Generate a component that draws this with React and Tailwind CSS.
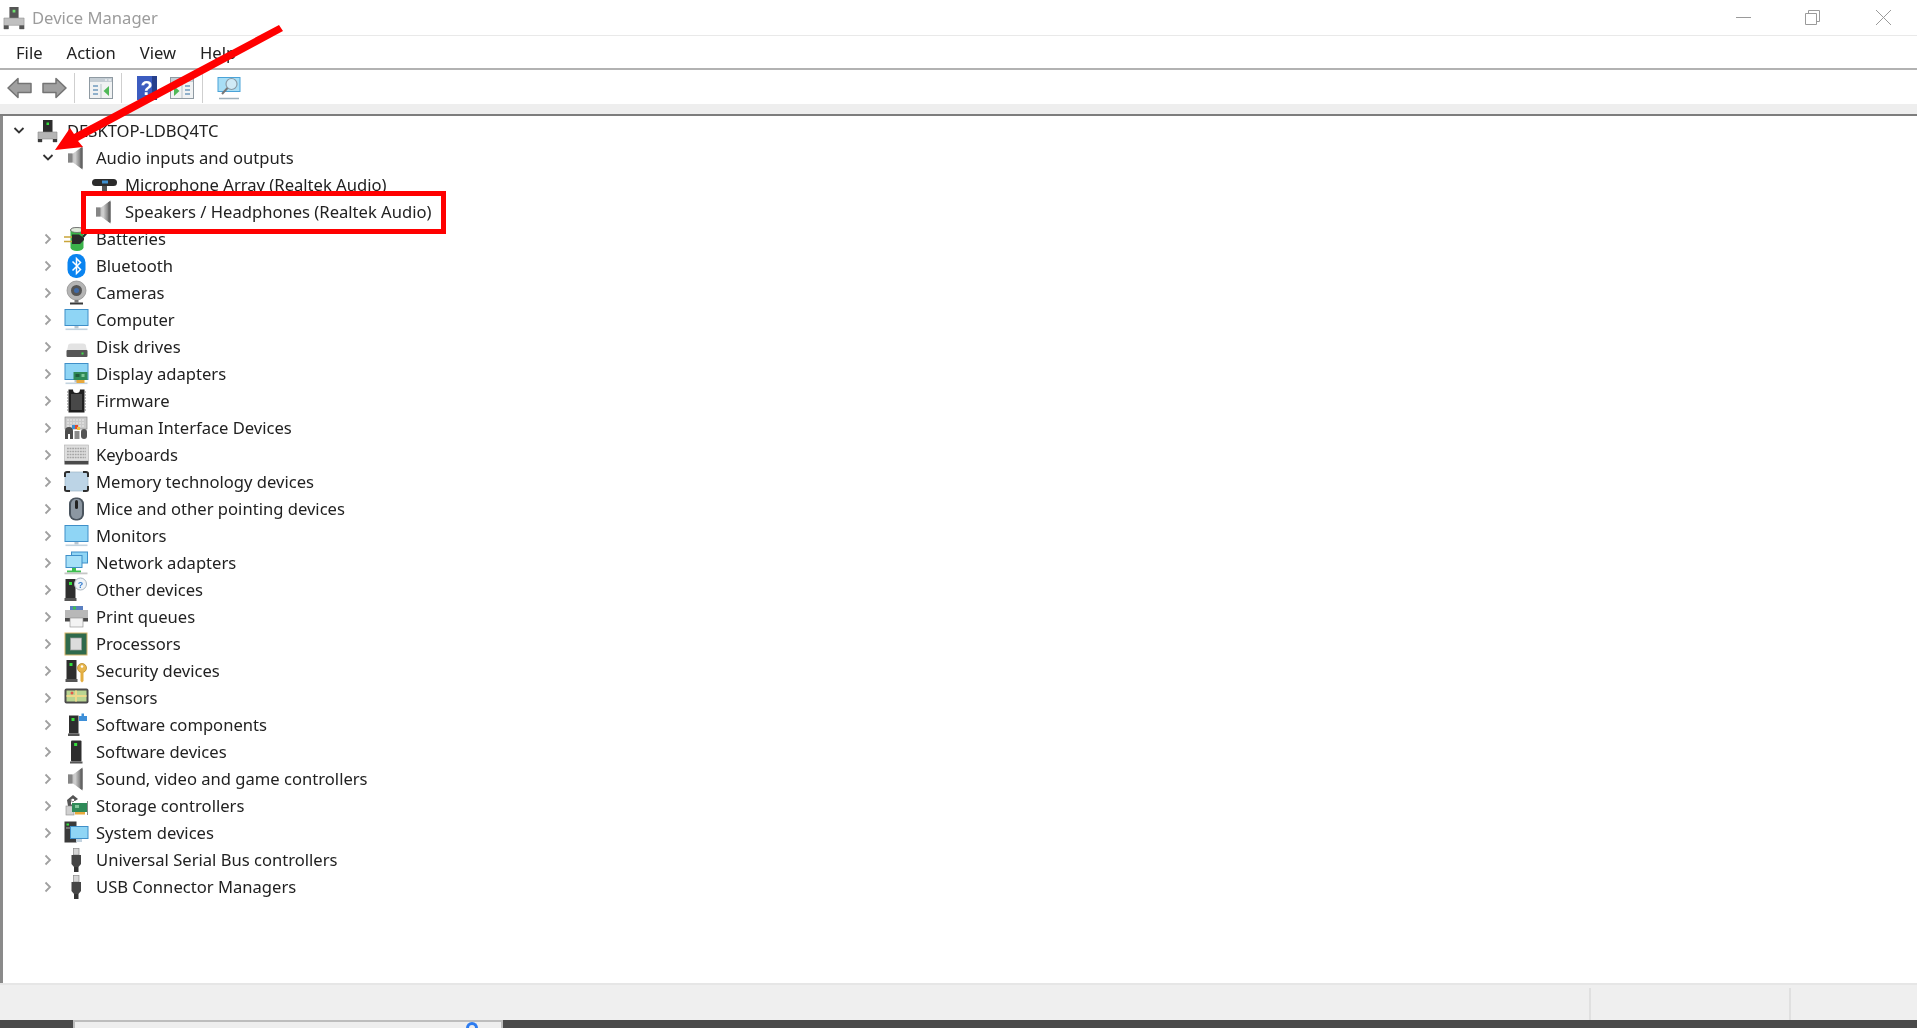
import React from "react";

const Ico = ({ children, className = "w-6 h-6" }) => (
  <svg viewBox="0 0 24 24" className={`${className} shrink-0 block overflow-visible`}>{children}</svg>
);

const Chevron = ({ open }) =>
  open ? (
    <svg viewBox="0 0 20 12" className="w-5 h-3 block">
      <path d="M5.5 3 L10 7.5 L14.5 3" fill="none" stroke="#333" strokeWidth="1.8" />
    </svg>
  ) : (
    <svg viewBox="0 0 20 14" className="w-5 h-[14px] block">
      <path d="M7.5 2.5 L12 7 L7.5 11.5" fill="none" stroke="#a0a0a0" strokeWidth="1.8" />
    </svg>
  );

const Tower = ({ x = 7, y = 1, w = 10, h = 20 }) => (
  <g>
    <rect x={x} y={y} width={w} height={h} rx="1" fill="#2e2e2e" />
    <rect x={x + w * 0.3} y={y + 2.5} width="3" height="3" fill="#35e03c" />
    <rect x={x - 1} y={y + h} width={w + 2} height="2" fill="#555" />
  </g>
);

const Monitor = ({ x = 1, y = 2, w = 22, h = 15 }) => (
  <g>
    <rect x={x} y={y} width={w} height={h} fill="#3f8fc8" />
    <rect x={x + 1} y={y + 1} width={w - 2} height={h - 2} fill="#8fd5f5" />
    <rect x={x + w / 2 - 2} y={y + h} width="4" height="2.5" fill="#b9c6cf" />
    <rect x={x + 1} y={y + h + 2.5} width={w - 2} height="1.6" fill="#c3d3df" />
  </g>
);

const GreenCard = ({ x = 9, y = 11 }) => (
  <g>
    <rect x={x} y={y} width="14" height="8" fill="#2f8a58" />
    <rect x={x + 2} y={y + 2} width="4" height="3" fill="#1f5a3c" />
    <rect x={x + 8} y={y + 2} width="3" height="3" fill="#7fc79a" />
    <rect x={x + 3} y={y + 8} width="8" height="3" fill="#e8a93c" />
  </g>
);

const SpeakerIco = () => (
  <Ico>
    <defs>
      <linearGradient id="spk" x1="0" x2="1" y1="0" y2="0">
        <stop offset="0" stopColor="#a8a8a8" />
        <stop offset="0.5" stopColor="#d0d0d0" />
        <stop offset="1" stopColor="#5a5a5a" />
      </linearGradient>
    </defs>
    <path d="M4 7.5 H9 L18.5 0.5 V23.5 L9 16.5 H4 Z" fill="url(#spk)" />
    <rect x="4" y="7.5" width="4.5" height="9" fill="#858585" />
    <rect x="16.5" y="2" width="2" height="20" fill="#646464" />
  </Ico>
);

const UsbIco = () => (
  <Ico>
    <rect x="9.5" y="0.5" width="5.5" height="6.5" fill="#d6d6d6" stroke="#8a8a8a" strokeWidth="0.7" />
    <path d="M7.5 7 H17 V16 L14.5 19 H10 L7.5 16 Z" fill="#454545" />
    <rect x="10" y="19" width="4.5" height="5" fill="#333" />
  </Ico>
);

const icons = {
  root: (
    <Ico>
      <rect x="8" y="1" width="9.5" height="13" fill="#2c2c2c" />
      <rect x="11.5" y="3.5" width="2.5" height="2.5" fill="#35e03c" />
      <path d="M3 13 H22 V23 H18 V20 H7 V23 H3 Z" fill="#b5b5b5" stroke="#8c8c8c" strokeWidth="0.6" />
      <rect x="3" y="20" width="4" height="3" fill="#3a3a3a" />
      <rect x="18" y="20" width="4" height="3" fill="#3a3a3a" />
    </Ico>
  ),
  speaker: <SpeakerIco />,
  mic: (
    <Ico>
      <rect x="0" y="6" width="25" height="7" rx="3.5" fill="#2b2b2b" />
      <rect x="10" y="7.5" width="6" height="3" fill="#3d8fd0" />
      <rect x="10" y="13" width="5" height="5" fill="#555" />
    </Ico>
  ),
  battery: (
    <Ico>
      <ellipse cx="13" cy="3" rx="6.5" ry="2.5" fill="#dfe9da" stroke="#6a6a6a" strokeWidth="0.8" />
      <path d="M6.5 3 V20.5 A6.5 3.5 0 0 0 19.5 20.5 V3 Z" fill="#3bb34a" />
      <ellipse cx="13" cy="3" rx="6.5" ry="2.5" fill="#dfe9da" stroke="#6a6a6a" strokeWidth="0.8" />
      <path d="M0 10 H8 M0 14.5 H8" stroke="#c9a53a" strokeWidth="1.6" />
      <path d="M8 7.5 H15 L20 11 V13 L16 17 H8 Z" fill="#2a2a2a" />
      <path d="M19 10 L23.5 5" stroke="#2a2a2a" strokeWidth="2" />
    </Ico>
  ),
  bluetooth: (
    <Ico>
      <rect x="3.5" y="0" width="18" height="24" rx="8.5" fill="#0a84f0" />
      <path d="M8.5 7.5 L16.5 15.5 L12.5 19.5 V4.5 L16.5 8.5 L8.5 16.5" fill="none" stroke="#fff" strokeWidth="1.5" />
    </Ico>
  ),
  camera: (
    <Ico>
      <circle cx="12.5" cy="9.5" r="9.5" fill="#b5b5b5" stroke="#8a8a8a" strokeWidth="0.7" />
      <circle cx="12.5" cy="9.5" r="5.5" fill="#555" />
      <circle cx="12.5" cy="9.5" r="2.5" fill="#3f6aa8" />
      <rect x="10.5" y="19" width="4" height="2.5" fill="#777" />
      <rect x="6" y="21.5" width="13" height="2" fill="#3a3a3a" />
    </Ico>
  ),
  computer: (
    <Ico>
      <Monitor x={0.5} y={1} w={24} h={17} />
    </Ico>
  ),
  disk: (
    <Ico>
      <path d="M4 11 Q4 8.5 7 8.5 H19 Q22 8.5 22 11 L23 16 H3 Z" fill="#e3e3e3" />
      <rect x="2.5" y="15" width="21" height="7" rx="1" fill="#565656" />
      <rect x="17.5" y="17.5" width="2" height="2" fill="#3ee04a" />
    </Ico>
  ),
  display: (
    <Ico>
      <Monitor x={0.5} y={1} w={24} h={17} />
      <GreenCard x={9.5} y={10} />
    </Ico>
  ),
  firmware: (
    <Ico>
      <path d="M4.5 0.5 H9 A3.5 3.5 0 0 0 16 0.5 H20.5 V23.5 H4.5 Z" fill="#1f1f1f" />
      <path d="M3 3 H4.5 M3 6 H4.5 M3 9 H4.5 M3 12 H4.5 M3 15 H4.5 M3 18 H4.5 M3 21 H4.5 M20.5 3 H22 M20.5 6 H22 M20.5 9 H22 M20.5 12 H22 M20.5 15 H22 M20.5 18 H22 M20.5 21 H22" stroke="#777" strokeWidth="1.2" />
      <rect x="7" y="5" width="11" height="16" fill="#484848" />
    </Ico>
  ),
  hid: (
    <Ico>
      <rect x="1" y="1" width="22" height="12" fill="#c9c9c9" stroke="#8a8a8a" strokeWidth="0.7" />
      <path d="M3 4 H21 M3 7 H21 M3 10 H21" stroke="#eee" strokeWidth="1.2" strokeDasharray="2 1" />
      <path d="M1 23 V15 Q1 11 5 11 Q9 11 9 15 V23 H6 V18 H4 V23 Z" fill="#4d4d4d" />
      <rect x="10" y="9" width="4" height="4" fill="#e2492f" />
      <rect x="8" y="9" width="3" height="4" fill="#3d8fd0" />
      <rect x="13" y="11" width="3" height="3" fill="#f0c040" />
      <rect x="10.5" y="15" width="5" height="8" fill="#8a8a8a" />
      <rect x="17" y="13" width="6" height="10" rx="3" fill="#555" />
    </Ico>
  ),
  keyboard: (
    <Ico>
      <rect x="0.5" y="2" width="24" height="16" fill="#dedede" stroke="#b0b0b0" strokeWidth="0.6" />
      <path d="M3 5.5 H22 M3 8.5 H22 M3 11.5 H22 M3 14.5 H22" stroke="#a5a5a5" strokeWidth="1.3" strokeDasharray="1.8 0.8" />
      <rect x="0.5" y="18" width="24" height="3.5" fill="#4a4a4a" />
    </Ico>
  ),
  memory: (
    <Ico>
      <rect x="1" y="2" width="23" height="19" rx="2" fill="#bcd4e6" stroke="#9db4c4" strokeWidth="0.7" />
      <path d="M1 7 V3.5 Q1 2 3 2 H6 M19 2 H22 Q24 2 24 3.5 V7 M24 16 V19.5 Q24 21 22 21 H19 M6 21 H3 Q1 21 1 19.5 V16" fill="none" stroke="#2e2e2e" strokeWidth="2" />
    </Ico>
  ),
  mouse: (
    <Ico>
      <rect x="5" y="0.5" width="15" height="23" rx="6.5" fill="#4a545e" />
      <rect x="7" y="2" width="11" height="20" rx="5" fill="#8c97a2" />
      <rect x="11" y="3" width="3" height="9" rx="1.5" fill="#222" />
    </Ico>
  ),
  network: (
    <Ico>
      <rect x="7" y="0.5" width="17" height="12" fill="#3f8fc8" />
      <rect x="8" y="1.5" width="15" height="10" fill="#8fd5f5" />
      <rect x="1.5" y="4" width="17" height="13" fill="#3f8fc8" />
      <rect x="2.5" y="5" width="15" height="11" fill="#a6e0f8" />
      <rect x="8" y="17" width="4" height="3" fill="#3fbf50" />
      <rect x="3" y="19.5" width="14" height="2" fill="#3fbf50" />
      <rect x="0.5" y="21.5" width="23" height="1.8" fill="#c6c6c6" />
    </Ico>
  ),
  other: (
    <Ico>
      <rect x="1.5" y="1" width="10" height="19" fill="#2e2e2e" />
      <rect x="5" y="4" width="3" height="3" fill="#35e03c" />
      <rect x="0.5" y="20" width="12" height="3" fill="#555" />
      <circle cx="16.5" cy="6" r="6" fill="#eef3f7" stroke="#a9b5bf" strokeWidth="1" />
      <text x="16.5" y="9.5" textAnchor="middle" fontSize="9" fontWeight="700" fill="#3a7fd0" fontFamily="Liberation Sans, sans-serif">?</text>
    </Ico>
  ),
  printer: (
    <Ico>
      <rect x="6" y="1" width="13" height="5" fill="#5a7fc0" />
      <rect x="9" y="1.5" width="3" height="3" fill="#3fbf50" />
      <rect x="1" y="5" width="23" height="11" fill="#b8b8b8" />
      <rect x="1" y="13" width="23" height="3.5" fill="#4a4a4a" />
      <rect x="6" y="13" width="13" height="9" fill="#f3f3f3" stroke="#8a8a8a" strokeWidth="0.6" />
    </Ico>
  ),
  cpu: (
    <Ico>
      <rect x="0.5" y="0.5" width="23" height="23" fill="#d6b56a" />
      <rect x="1.5" y="1.5" width="21" height="21" fill="#2f6a4c" />
      <rect x="6.5" y="6" width="11" height="12" fill="#dcdcdc" stroke="#9a9a9a" strokeWidth="0.7" />
    </Ico>
  ),
  security: (
    <Ico>
      <rect x="2.5" y="1" width="10" height="19" fill="#2e2e2e" />
      <rect x="5.5" y="4" width="3" height="3" fill="#35e03c" />
      <rect x="1.5" y="20" width="12" height="3" fill="#555" />
      <circle cx="18" cy="9" r="4.5" fill="#e8b64c" stroke="#b98a2a" strokeWidth="0.8" />
      <circle cx="18" cy="7.5" r="1.3" fill="#fff" />
      <path d="M16.5 13 H19.5 V22 L18 23.5 L16.5 22 Z" fill="#e3ad3f" />
    </Ico>
  ),
  sensors: (
    <Ico>
      <rect x="0.5" y="2.5" width="24" height="15" rx="2" fill="#4a4a4a" />
      <rect x="2.5" y="4.5" width="20" height="11" fill="#b9d592" />
      <path d="M2.5 10 H22.5 M12 4.5 V15.5" stroke="#efd98a" strokeWidth="2" />
      <circle cx="8" cy="7" r="1.5" fill="#e2584a" />
    </Ico>
  ),
  components: (
    <Ico>
      <rect x="5" y="2.5" width="9.5" height="18" fill="#2e2e2e" />
      <rect x="7.5" y="5" width="3" height="3" fill="#35e03c" />
      <rect x="4" y="20.5" width="11.5" height="2.5" fill="#555" />
      <path d="M15 3 H17.5 V0.5 H20 V3 H23 V8 H15 Z" fill="#3d8fd8" />
    </Ico>
  ),
  device: (
    <Ico>
      <Tower x={7} y={0.5} w={10.5} h={21} />
    </Ico>
  ),
  storage: (
    <Ico>
      <path d="M3 6 L9 1 L14 5 L11 7 H7 V10 L9 12 L4 12 Z" fill="#555" />
      <path d="M6 6 L9 4 L11 6 L9 8 Z" fill="#fff" stroke="#555" strokeWidth="0.8" />
      <rect x="2" y="12" width="8" height="9" fill="#d0d0d0" stroke="#8a8a8a" strokeWidth="0.6" />
      <rect x="8" y="9" width="15" height="9" fill="#2f8a58" />
      <rect x="11" y="11" width="4" height="3" fill="#7fc79a" />
      <rect x="11" y="18" width="10" height="2.5" fill="#e8a93c" />
      <rect x="23" y="7" width="1" height="14" fill="#8a8a8a" />
    </Ico>
  ),
  system: (
    <Ico>
      <rect x="0.5" y="0.5" width="12" height="21" fill="#3a3a3a" />
      <rect x="2.5" y="2.5" width="2.5" height="2" fill="#35e03c" />
      <path d="M2 7 H11" stroke="#aaa" strokeWidth="1" />
      <rect x="6" y="5" width="18.5" height="13" fill="#3f8fc8" />
      <rect x="7" y="6" width="16.5" height="11" fill="#8fd5f5" />
      <rect x="12" y="18" width="6" height="3" fill="#c3d3df" />
    </Ico>
  ),
  usb: <UsbIco />,
};

const rows = [
  ["DESKTOP-LDBQ4TC", "root", 0, "open"],
  ["Audio inputs and outputs", "speaker", 1, "open"],
  ["Microphone Array (Realtek Audio)", "mic", 2],
  ["Speakers / Headphones (Realtek Audio)", "speaker", 2],
  ["Batteries", "battery", 1, "closed"],
  ["Bluetooth", "bluetooth", 1, "closed"],
  ["Cameras", "camera", 1, "closed"],
  ["Computer", "computer", 1, "closed"],
  ["Disk drives", "disk", 1, "closed"],
  ["Display adapters", "display", 1, "closed"],
  ["Firmware", "firmware", 1, "closed"],
  ["Human Interface Devices", "hid", 1, "closed"],
  ["Keyboards", "keyboard", 1, "closed"],
  ["Memory technology devices", "memory", 1, "closed"],
  ["Mice and other pointing devices", "mouse", 1, "closed"],
  ["Monitors", "computer", 1, "closed"],
  ["Network adapters", "network", 1, "closed"],
  ["Other devices", "other", 1, "closed"],
  ["Print queues", "printer", 1, "closed"],
  ["Processors", "cpu", 1, "closed"],
  ["Security devices", "security", 1, "closed"],
  ["Sensors", "sensors", 1, "closed"],
  ["Software components", "components", 1, "closed"],
  ["Software devices", "device", 1, "closed"],
  ["Sound, video and game controllers", "speaker", 1, "closed"],
  ["Storage controllers", "storage", 1, "closed"],
  ["System devices", "system", 1, "closed"],
  ["Universal Serial Bus controllers", "usb", 1, "closed"],
  ["USB Connector Managers", "usb", 1, "closed"],
];

const indent = ["pl-[6px]", "pl-[35px]", "pl-[63px]"];

const Row = ({ label, icon, depth, state }) => (
  <div className={`flex items-center h-[27px] ${indent[depth]}`}>
    <span className="w-5 flex justify-center items-center shrink-0">
      {state ? <Chevron open={state === "open"} /> : null}
    </span>
    <span className="ml-[6px] w-6 h-6 shrink-0">{icons[icon]}</span>
    <span className={`${depth === 2 ? "ml-[9px]" : "ml-2"} whitespace-nowrap mt-[2px]`}>{label}</span>
  </div>
);

const NavArrow = ({ flip }) => (
  <svg viewBox="0 0 25 22" className="w-[25px] h-[22px] block">
    <g transform={flip ? "translate(25 0) scale(-1 1)" : undefined}>
      <path d="M1 11 L11 1.5 V6.5 H24 V15.5 H11 V20.5 Z" fill="#a0a0a0" stroke="#747474" strokeWidth="1.5" strokeLinejoin="round" />
    </g>
  </svg>
);

const Pane = ({ arrow }) => (
  <svg viewBox="0 0 24 22" className="w-6 h-[22px] block">
    <rect x="0.5" y="0.5" width="23" height="21" fill="#f0f2f3" stroke="#8f9aa2" />
    <rect x="1" y="1" width="22" height="4" fill="#c4cdd4" />
    <path d="M16 3 H18 M19.5 3 H22" stroke="#fff" strokeWidth="1" />
    {arrow === "left" ? (
      <g>
        <path d="M4 9 H9 M4 13 H9 M4 17 H9" stroke="#8fb0cb" strokeWidth="2" />
        <path d="M12 7 V21" stroke="#b9c3ca" />
        <path d="M20 9 V19 L14.5 14 Z" fill="#4fb858" />
      </g>
    ) : (
      <g>
        <path d="M15 9 H20 M15 13 H20 M15 17 H20" stroke="#8fb0cb" strokeWidth="2" />
        <path d="M12 7 V21" stroke="#b9c3ca" />
        <path d="M4 9 V19 L9.5 14 Z" fill="#4fb858" />
      </g>
    )}
  </svg>
);

export default function App() {
  return (
    <div className="relative w-full h-screen overflow-hidden flex flex-col bg-white text-[#1e1e1e] font-['Noto_Sans',sans-serif] text-[16.6px] leading-none blur-[0.35px]">
      {/* title bar */}
      <div className="h-[35px] shrink-0 flex items-center pl-[3px] border-b border-[#e9e9e9] box-content">
        <svg viewBox="0 0 24 24" className="w-[22px] h-[24px] block shrink-0">
          <rect x="7" y="0" width="10" height="13" fill="#555" />
          <rect x="10.5" y="3" width="3" height="3" fill="#6ee06f" />
          <path d="M1 12 H23 V24 H18 V20 H6 V24 H1 Z" fill="#c0c0c0" stroke="#8c8c8c" strokeWidth="0.6" />
          <rect x="1" y="20" width="5" height="4" fill="#555" />
          <rect x="18" y="20" width="5" height="4" fill="#555" />
        </svg>
        <span className="ml-[7px] mt-[2px] text-[#9c9c9c]">Device Manager</span>
        <div className="ml-auto flex items-center pr-[26px]">
          <svg viewBox="0 0 15 15" className="w-[15px] h-[15px] block"><path d="M0 7.5 H15" stroke="#9a9a9a" strokeWidth="1" /></svg>
          <svg viewBox="0 0 15 15" className="ml-[54px] w-[15px] h-[15px] block"><path d="M3.5 3 V0.5 H14.5 V11.5 H12 M0.5 3.5 H11.5 V14.5 H0.5 Z" fill="none" stroke="#9a9a9a" strokeWidth="1" /></svg>
          <svg viewBox="0 0 15 15" className="ml-[56px] w-[15px] h-[15px] block"><path d="M0 0 L15 15 M15 0 L0 15" stroke="#9a9a9a" strokeWidth="1" /></svg>
        </div>
      </div>
      {/* menu */}
      <div className="h-[32px] shrink-0 flex items-center pl-4 pt-[2px] gap-6 text-[#222]">
        <span>File</span>
        <span>Action</span>
        <span>View</span>
        <span>Help</span>
      </div>
      <div className="h-[2px] shrink-0 bg-[#b2b2b2]" />
      {/* toolbar */}
      <div className="h-[33px] shrink-0 flex items-center pl-[7px] mt-px">
        <NavArrow />
        <span className="ml-[10px]"><NavArrow flip /></span>
        <span className="ml-[7px] w-px h-[30px] bg-[#cfcfcf]" />
        <span className="ml-[14px]"><Pane arrow="left" /></span>
        <span className="ml-2 w-px h-[30px] bg-[#cfcfcf]" />
        <span className="ml-[15px]">
          <svg viewBox="0 0 20 24" className="w-5 h-6 block">
            <rect x="0" y="0" width="20" height="24" fill="#3c5cc0" />
            <rect x="15" y="0" width="5" height="24" fill="#26408c" />
            <text x="9.5" y="19" textAnchor="middle" fontSize="20" fontWeight="700" fill="#fff" fontFamily="Liberation Sans, sans-serif">?</text>
          </svg>
        </span>
        <span className="ml-[13px]"><Pane arrow="right" /></span>
        <span className="ml-2 w-px h-[30px] bg-[#cfcfcf]" />
        <span className="ml-[14px]">
          <svg viewBox="0 0 24 24" className="w-6 h-6 block">
            <rect x="0.5" y="1" width="23" height="15" fill="#4aa3d8" />
            <rect x="1.5" y="2" width="21" height="13" fill="#a8def5" />
            <circle cx="14.5" cy="8" r="5.5" fill="#cfeaf6" stroke="#8a9aa5" strokeWidth="1.2" />
            <path d="M10.5 12 L5 18" stroke="#777" strokeWidth="2" />
            <path d="M2 22.5 H22" stroke="#9fb0bb" strokeWidth="1.5" />
          </svg>
        </span>
      </div>
      <div className="h-[10px] shrink-0 bg-[#eeeeee]" />
      <div className="h-[2px] shrink-0 bg-[#7d7d7d]" />
      {/* tree */}
      <div className="flex-1 min-h-0 border-l-[3px] border-[#8a8a8a] pt-[1px] text-[#222]">
        {rows.map(([label, icon, depth, state]) => (
          <Row key={label} label={label} icon={icon} depth={depth} state={state} />
        ))}
      </div>
      {/* status bar */}
      <div className="h-[2px] shrink-0 bg-[#e6e6e6]" />
      <div className="h-[35px] shrink-0 bg-[#efefef] flex justify-end">
        <span className="w-[200px] border-l-2 border-[#e0e0e0] mt-[3px]" />
        <span className="w-[128px] border-l-2 border-[#e0e0e0] mt-[3px]" />
      </div>
      {/* taskbar strip */}
      <div className="h-[8px] shrink-0 bg-[#4a4a4a] flex">
        <div className="ml-[73px] w-[430px] bg-[#eeeeee] border-t-2 border-x-2 border-[#bdbdbd] flex justify-end pr-[23px]">
          <span className="w-[12px] h-[6px] rounded-t-full border-[3px] border-b-0 border-[#2d7cf0]" />
        </div>
      </div>
      {/* annotations */}
      <div className="absolute left-[81px] top-[191px] w-[365px] h-[43px] border-[5px] border-[#ff0000]" />
      <svg className="absolute left-0 top-0 pointer-events-none" width="1917" height="1028" viewBox="0 0 1917 1028">
        <path d="M279 25 L283 31 L78 141 L83 147 L55 150 L70 128 L74 134 Z" fill="#ff0000" />
      </svg>
    </div>
  );
}
